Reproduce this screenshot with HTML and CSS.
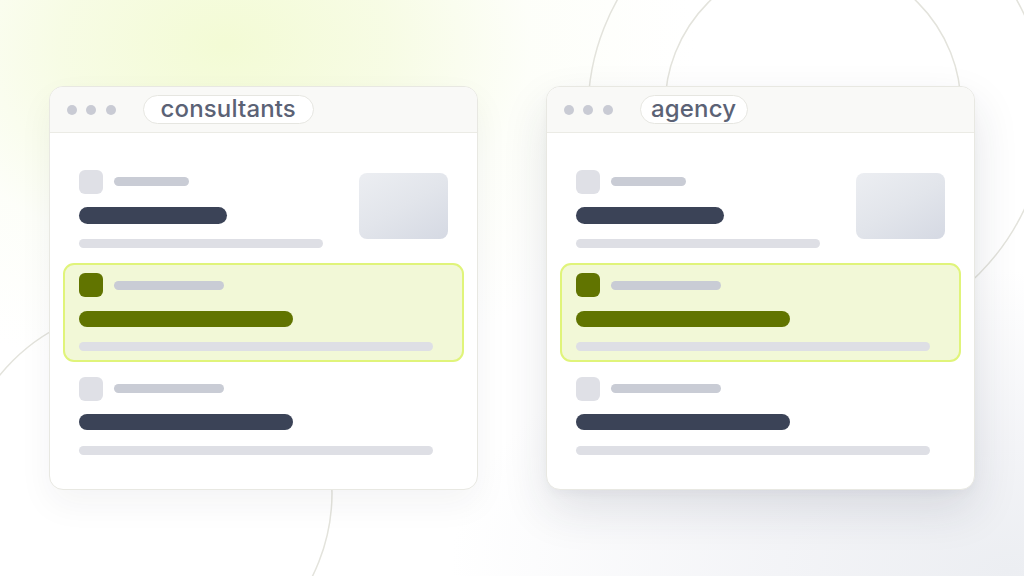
FILE: index.html
```html
<!DOCTYPE html>
<html lang="en">
<head>
<meta charset="utf-8">
<title>consultants vs agency</title>
<link rel="stylesheet" href="styles.css">
</head>
<body>
<div class="stage">
  <svg class="bg-lines" width="1024" height="576" viewBox="0 0 1024 576" aria-hidden="true">
    <circle cx="813" cy="107" r="148" fill="none" stroke="#e3e3dc" stroke-width="1.5"/>
    <circle cx="817" cy="112" r="229" fill="none" stroke="#e3e3dc" stroke-width="1.5"/>
    <circle cx="145" cy="493" r="187" fill="none" stroke="#e3e3dc" stroke-width="1.5"/>
  </svg>

  <div class="windows">
    <section class="window window-left">
      <header class="win-head">
        <span class="dot"></span><span class="dot"></span><span class="dot"></span>
        <span class="pill pill-wide">consultants</span>
      </header>
      <div class="win-body">
        <div class="row row-media">
          <div class="row-main">
            <div class="row-top"><span class="sq"></span><span class="meta meta-short"></span></div>
            <span class="title title-short"></span>
            <span class="line line-mid"></span>
          </div>
          <span class="thumb"></span>
        </div>
        <div class="row row-active">
          <div class="row-top"><span class="sq"></span><span class="meta"></span></div>
          <span class="title"></span>
          <span class="line"></span>
        </div>
        <div class="row">
          <div class="row-top"><span class="sq"></span><span class="meta"></span></div>
          <span class="title"></span>
          <span class="line"></span>
        </div>
      </div>
    </section>

    <section class="window window-right">
      <header class="win-head">
        <span class="dot"></span><span class="dot"></span><span class="dot"></span>
        <span class="pill">agency</span>
      </header>
      <div class="win-body">
        <div class="row row-media">
          <div class="row-main">
            <div class="row-top"><span class="sq"></span><span class="meta meta-short"></span></div>
            <span class="title title-short"></span>
            <span class="line line-mid"></span>
          </div>
          <span class="thumb"></span>
        </div>
        <div class="row row-active">
          <div class="row-top"><span class="sq"></span><span class="meta"></span></div>
          <span class="title"></span>
          <span class="line"></span>
        </div>
        <div class="row">
          <div class="row-top"><span class="sq"></span><span class="meta"></span></div>
          <span class="title"></span>
          <span class="line"></span>
        </div>
      </div>
    </section>
  </div>
</div>
</body>
</html>
```

FILE: styles.css
```css
* { box-sizing: border-box; }

html, body {
  margin: 0;
  padding: 0;
  width: 1024px;
  height: 576px;
  overflow: hidden;
  font-family: Inter, "Noto Sans", "Liberation Sans", sans-serif;
}

.stage {
  position: relative;
  width: 1024px;
  height: 576px;
  background:
    radial-gradient(ellipse 470px 340px at 225px 45px, #f3fbd5 0%, rgba(245,251,222,0.8) 35%, rgba(250,253,240,0.4) 65%, rgba(255,255,255,0) 100%),
    radial-gradient(ellipse 560px 300px at 1010px 570px, #eceef2 0%, rgba(240,241,245,0.75) 45%, rgba(255,255,255,0) 100%),
    #ffffff;
  overflow: hidden;
}

.bg-lines {
  position: absolute;
  left: 0;
  top: 0;
}

.windows {
  position: relative;
  display: flex;
  gap: 68px;
  padding: 86px 0 0 49px;
}

.window {
  width: 429px;
  height: 404px;
  background: #ffffff;
  border: 1px solid #e8e8e2;
  border-radius: 14px;
  overflow: hidden;
}

.window-left {
  box-shadow: 0 14px 34px rgba(40, 45, 60, 0.05);
}

.window-right {
  box-shadow: 0 20px 46px rgba(30, 38, 64, 0.12), 0 4px 10px rgba(30, 38, 64, 0.03);
}

.win-head {
  height: 46px;
  background: #f9f9f7;
  border-bottom: 1px solid #ebebe5;
  display: flex;
  align-items: center;
  padding: 0 0 0 16.5px;
}

.dot {
  width: 10px;
  height: 10px;
  border-radius: 50%;
  background: #c9cbd4;
  margin-right: 9.5px;
}

.dot:nth-child(3) { margin-right: 27px; }

.pill {
  height: 29px;
  display: inline-flex;
  align-items: center;
  padding: 0 10.5px;
  background: #ffffff;
  border: 1px solid #e6e6e1;
  border-radius: 15px;
  font-size: 24px;
  font-weight: 500;
  color: #5b6275;
  letter-spacing: 0.15px;
  line-height: 1;
  margin-top: -1px;
}

.pill-wide { padding: 0 17px; }

.win-body {
  display: flex;
  flex-direction: column;
  gap: 4.5px;
  padding: 26px 13px 0 13px;
}

.row {
  height: 99px;
  border: 2px solid transparent;
  border-radius: 11px;
  padding: 8.5px 14px;
  display: flex;
  flex-direction: column;
  align-items: flex-start;
}

.row-media {
  flex-direction: row;
  justify-content: space-between;
  align-items: flex-start;
}

.row-main {
  display: flex;
  flex-direction: column;
  align-items: flex-start;
}

.row-top {
  display: flex;
  align-items: center;
  gap: 11px;
  height: 24px;
}

.sq {
  width: 24px;
  height: 24px;
  border-radius: 6px;
  background: #dfe0e6;
}

.meta {
  width: 110px;
  height: 9px;
  border-radius: 5px;
  background: #c9ccd5;
}

.meta-short { width: 75px; }

.title {
  width: 214px;
  height: 16.5px;
  border-radius: 9px;
  background: #3b4357;
  margin-top: 13.5px;
}

.title-short { width: 148px; }

.line {
  width: 354px;
  height: 9px;
  border-radius: 5px;
  background: #dedfe5;
  margin-top: 15.5px;
}

.line-mid { width: 244px; }

.thumb {
  width: 89px;
  height: 66px;
  border-radius: 8px;
  margin-top: 3.5px;
  background: linear-gradient(150deg, #eceef2 0%, #e2e5eb 50%, #d5d9e3 100%);
}

.row-active {
  background: #f2f8d7;
  border-color: #e0f47a;
}

.row-active .sq { background: #617400; }
.row-active .title { background: #617400; }
```
